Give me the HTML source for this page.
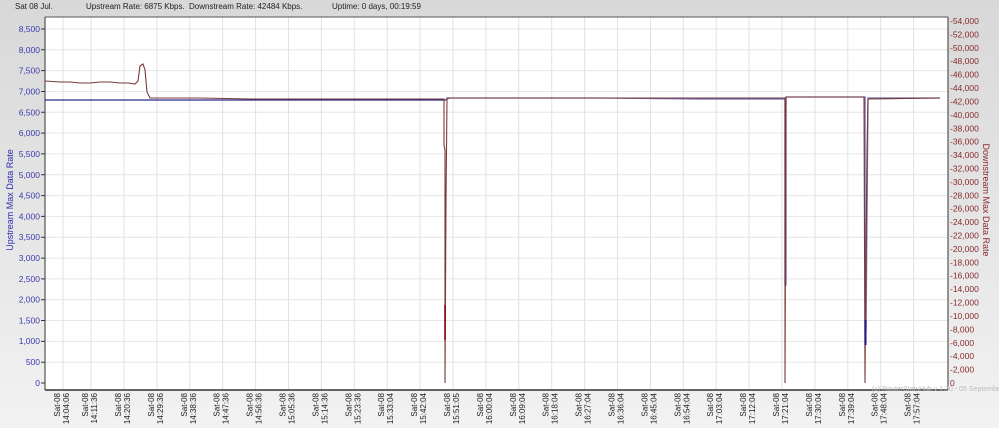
<!DOCTYPE html>
<html><head><meta charset="utf-8"><style>
html,body{margin:0;padding:0;background:#e6e6e6;}
svg{display:block;font-family:"Liberation Sans",Arial,sans-serif;}
</style></head><body>
<svg width="999" height="428" viewBox="0 0 999 428" xmlns="http://www.w3.org/2000/svg">
<defs><linearGradient id="bg" x1="0" y1="0" x2="0" y2="1"><stop offset="0" stop-color="#d8d8d8"/><stop offset="1" stop-color="#f2f2f2"/></linearGradient></defs>
<rect width="999" height="428" fill="url(#bg)"/>
<g font-size="8" fill="#222">
<text x="15" y="9">Sat 08 Jul.</text>
<text x="86" y="9">Upstream Rate: 6875 Kbps.</text>
<text x="189" y="9">Downstream Rate: 42484 Kbps.</text>
<text x="332" y="9">Uptime: 0 days, 00:19:59</text>
</g>
<rect x="45" y="17" width="903" height="373" fill="#fff"/>
<path stroke="#e6e6e6" stroke-width="1" fill="none" d="M45 362.2H948M45 341.4H948M45 320.5H948M45 299.7H948M45 278.9H948M45 258.1H948M45 237.2H948M45 216.4H948M45 195.6H948M45 174.8H948M45 153.9H948M45 133.1H948M45 112.3H948M45 91.5H948M45 70.6H948M45 49.8H948M45 29H948"/>
<path stroke="#e2e2e2" stroke-width="1" fill="none" d="M63 17V390M91 17V390M124 17V390M156.9 17V390M189.8 17V390M222.7 17V390M255.6 17V390M288.5 17V390M321.4 17V390M354.3 17V390M387.2 17V390M420.1 17V390M453 17V390M485.9 17V390M518.8 17V390M551.7 17V390M584.6 17V390M617.5 17V390M650.4 17V390M683.3 17V390M716.2 17V390M749.1 17V390M782 17V390M814.9 17V390M847.8 17V390M880.7 17V390M913.6 17V390"/>
<path stroke="#333" stroke-width="1" fill="none" d="M41 383H45M41 362.2H45M41 341.4H45M41 320.5H45M41 299.7H45M41 278.9H45M41 258.1H45M41 237.2H45M41 216.4H45M41 195.6H45M41 174.8H45M41 153.9H45M41 133.1H45M41 112.3H45M41 91.5H45M41 70.6H45M41 49.8H45M41 29H45"/>
<g font-size="8.5" fill="#3a3ab0" text-anchor="end">
<text x="40" y="386">0</text><text x="40" y="365">500</text><text x="40" y="344">1,000</text><text x="40" y="323.5">1,500</text><text x="40" y="302.7">2,000</text><text x="40" y="281.9">2,500</text><text x="40" y="261">3,000</text><text x="40" y="240.2">3,500</text><text x="40" y="219.4">4,000</text><text x="40" y="198.6">4,500</text><text x="40" y="177.8">5,000</text><text x="40" y="157">5,500</text><text x="40" y="136">6,000</text><text x="40" y="115.3">6,500</text><text x="40" y="94.5">7,000</text><text x="40" y="73.6">7,500</text><text x="40" y="52.8">8,000</text><text x="40" y="32">8,500</text>
</g>
<g font-size="8.5" fill="#8a2a2a">
<text x="950" y="386">0</text><text x="950" y="372.6">-2,000</text><text x="950" y="359.2">-4,000</text><text x="950" y="345.8">-6,000</text><text x="950" y="332.4">-8,000</text><text x="950" y="319">-10,000</text><text x="950" y="305.6">-12,000</text><text x="950" y="292.1">-14,000</text><text x="950" y="278.7">-16,000</text><text x="950" y="265.3">-18,000</text><text x="950" y="251.9">-20,000</text><text x="950" y="238.5">-22,000</text><text x="950" y="225.1">-24,000</text><text x="950" y="211.7">-26,000</text><text x="950" y="198.3">-28,000</text><text x="950" y="184.9">-30,000</text><text x="950" y="171.5">-32,000</text><text x="950" y="158.1">-34,000</text><text x="950" y="144.7">-36,000</text><text x="950" y="131.3">-38,000</text><text x="950" y="117.9">-40,000</text><text x="950" y="104.4">-42,000</text><text x="950" y="91">-44,000</text><text x="950" y="77.6">-46,000</text><text x="950" y="64.2">-48,000</text><text x="950" y="50.8">-50,000</text><text x="950" y="37.4">-52,000</text><text x="950" y="24">-54,000</text>
</g>
<g font-size="8" fill="#222" text-anchor="end">
<text transform="translate(60,393) rotate(-90)">Sat-08</text><text transform="translate(69,393) rotate(-90)">14:04:06</text>
<text transform="translate(88,393) rotate(-90)">Sat-08</text><text transform="translate(97,393) rotate(-90)">14:11:36</text>
<text transform="translate(121,393) rotate(-90)">Sat-08</text><text transform="translate(130,393) rotate(-90)">14:20:36</text>
<text transform="translate(153.9,393) rotate(-90)">Sat-08</text><text transform="translate(162.9,393) rotate(-90)">14:29:36</text>
<text transform="translate(186.8,393) rotate(-90)">Sat-08</text><text transform="translate(195.8,393) rotate(-90)">14:38:36</text>
<text transform="translate(219.7,393) rotate(-90)">Sat-08</text><text transform="translate(228.7,393) rotate(-90)">14:47:36</text>
<text transform="translate(252.6,393) rotate(-90)">Sat-08</text><text transform="translate(261.6,393) rotate(-90)">14:56:36</text>
<text transform="translate(285.5,393) rotate(-90)">Sat-08</text><text transform="translate(294.5,393) rotate(-90)">15:05:36</text>
<text transform="translate(318.4,393) rotate(-90)">Sat-08</text><text transform="translate(327.4,393) rotate(-90)">15:14:36</text>
<text transform="translate(351.3,393) rotate(-90)">Sat-08</text><text transform="translate(360.3,393) rotate(-90)">15:23:36</text>
<text transform="translate(384.2,393) rotate(-90)">Sat-08</text><text transform="translate(393.2,393) rotate(-90)">15:33:04</text>
<text transform="translate(417.1,393) rotate(-90)">Sat-08</text><text transform="translate(426.1,393) rotate(-90)">15:42:04</text>
<text transform="translate(450,393) rotate(-90)">Sat-08</text><text transform="translate(459,393) rotate(-90)">15:51:05</text>
<text transform="translate(482.9,393) rotate(-90)">Sat-08</text><text transform="translate(491.9,393) rotate(-90)">16:00:04</text>
<text transform="translate(515.8,393) rotate(-90)">Sat-08</text><text transform="translate(524.8,393) rotate(-90)">16:09:04</text>
<text transform="translate(548.7,393) rotate(-90)">Sat-08</text><text transform="translate(557.7,393) rotate(-90)">16:18:04</text>
<text transform="translate(581.6,393) rotate(-90)">Sat-08</text><text transform="translate(590.6,393) rotate(-90)">16:27:04</text>
<text transform="translate(614.5,393) rotate(-90)">Sat-08</text><text transform="translate(623.5,393) rotate(-90)">16:36:04</text>
<text transform="translate(647.4,393) rotate(-90)">Sat-08</text><text transform="translate(656.4,393) rotate(-90)">16:45:04</text>
<text transform="translate(680.3,393) rotate(-90)">Sat-08</text><text transform="translate(689.3,393) rotate(-90)">16:54:04</text>
<text transform="translate(713.2,393) rotate(-90)">Sat-08</text><text transform="translate(722.2,393) rotate(-90)">17:03:04</text>
<text transform="translate(746.1,393) rotate(-90)">Sat-08</text><text transform="translate(755.1,393) rotate(-90)">17:12:04</text>
<text transform="translate(779,393) rotate(-90)">Sat-08</text><text transform="translate(788,393) rotate(-90)">17:21:04</text>
<text transform="translate(811.9,393) rotate(-90)">Sat-08</text><text transform="translate(820.9,393) rotate(-90)">17:30:04</text>
<text transform="translate(844.8,393) rotate(-90)">Sat-08</text><text transform="translate(853.8,393) rotate(-90)">17:39:04</text>
<text transform="translate(877.7,393) rotate(-90)">Sat-08</text><text transform="translate(886.7,393) rotate(-90)">17:48:04</text>
<text transform="translate(910.6,393) rotate(-90)">Sat-08</text><text transform="translate(919.6,393) rotate(-90)">17:57:04</text>
</g>
<line x1="45" y1="17" x2="45" y2="390" stroke="#333"/>
<line x1="45" y1="390" x2="948" y2="390" stroke="#333" stroke-width="1.5"/>
<line x1="948" y1="17" x2="948" y2="390" stroke="#333"/>
<line x1="45" y1="17" x2="948" y2="17" stroke="#555"/>
<line x1="45" y1="100" x2="446" y2="100" stroke="#2a2a8a" stroke-width="1.2"/>
<polyline fill="none" stroke="#6a6ab0" stroke-width="1.3" points="446,100 447,98 500,98 600,98 700,99 785,99 785,285 786,285 786,97 862,97 865,97 865,240 866,330 868,98 940,98"/>
<polyline fill="none" stroke="#7a3a3a" stroke-width="1.1" points="45,81 60,82 70,82 80,83 90,83 100,82 110,82 120,83 128,83 135,84 138,81 140,66 143,64 145,70 147,92 150,98 170,98 200,98 250,99 300,99 350,99 400,99 444,99 444,145 445,150 445,383 446,200 447,99 450,98 500,98 600,98 700,98 785,98 785,383 786,97 864,97 865,383 866,250 867,150 868,99 940,98"/>
<line x1="865.5" y1="320" x2="865.5" y2="345" stroke="#1a1a80" stroke-width="2"/>
<line x1="445" y1="305" x2="445" y2="340" stroke="#8a0000" stroke-width="1.5"/>
<text x="13" y="200" font-size="9" fill="#2a2ab0" text-anchor="middle" transform="rotate(-90 13 200)">Upstream Max Data Rate</text>
<text x="983" y="200" font-size="9" fill="#8a2a2a" text-anchor="middle" transform="rotate(90 983 200)">Downstream Max Data Rate</text>
<text x="872" y="391" font-size="7" fill="#bbb">(c) RouterStatsHub v 1.30 - 05 September</text>
</svg>
</body></html>
